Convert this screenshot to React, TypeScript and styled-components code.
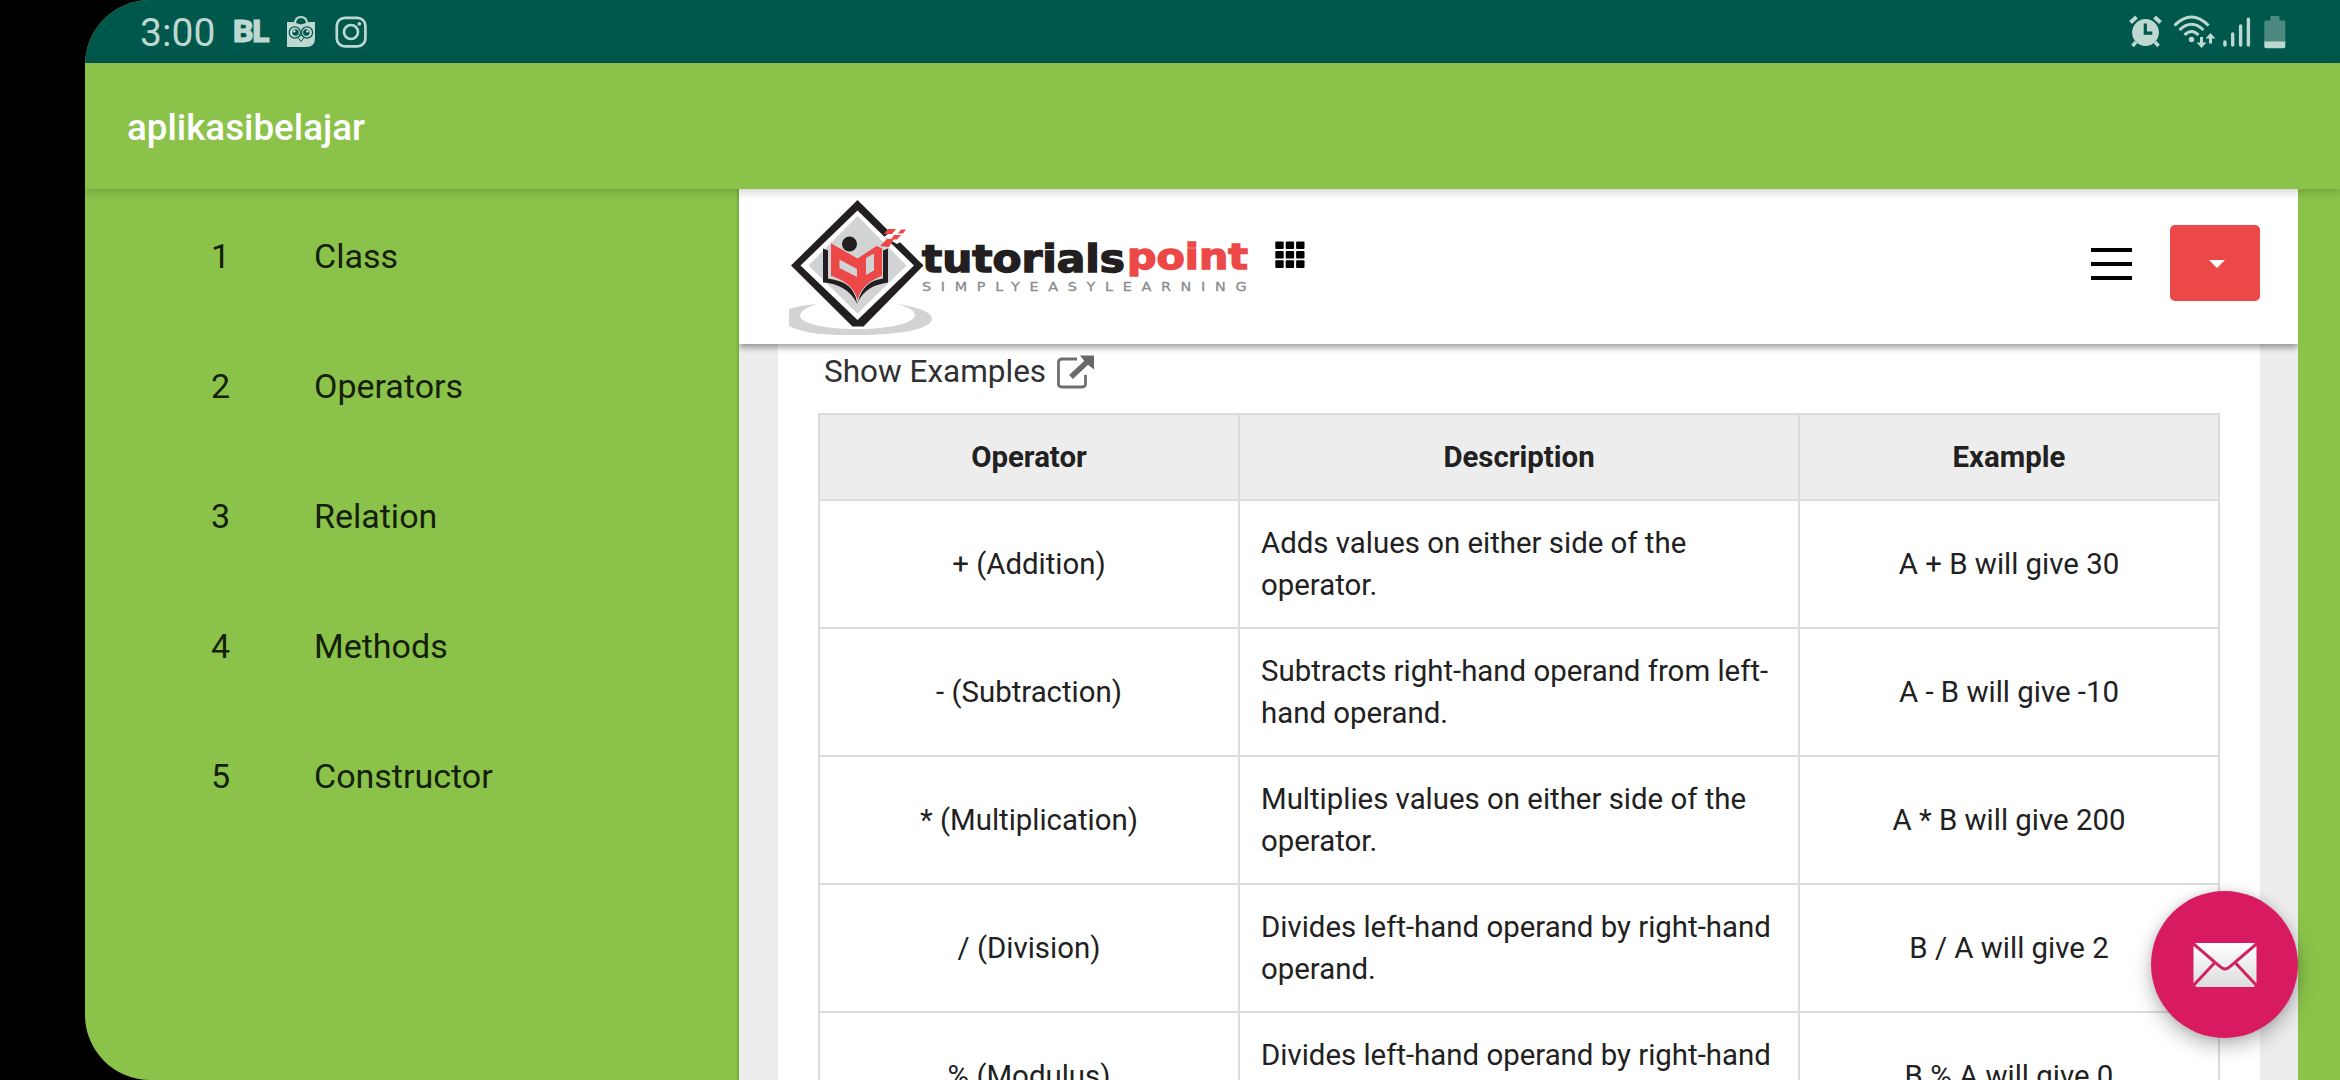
import React from 'react';
import styled, { createGlobalStyle } from 'styled-components';

const Global = createGlobalStyle`
  * { box-sizing: border-box; }
  body { margin: 0; background: #000; font-family: Roboto, "Noto Sans", sans-serif; overflow: hidden; }
`;

const ink = '#bdd7d1';

const Device = styled.div`
  width: 2340px;
  height: 1080px;
  padding-left: 85px;
  background: #000;
  overflow: hidden;
`;

const Screen = styled.div`
  position: relative;
  display: flex;
  flex-direction: column;
  height: 1080px;
  background: #8bc34a;
  border-radius: 65px 0 0 65px;
  overflow: hidden;
`;

const StatusBar = styled.div`
  flex: none;
  display: flex;
  justify-content: space-between;
  height: 63px;
  padding: 0 54px 0 55px;
  background: #00574b;
  color: ${ink};
`;

const StatusGroup = styled.div`
  display: flex;
  align-items: center;
  height: 63px;
`;

const Clock = styled.span`
  width: 93px;
  font-size: 39px;
  line-height: 63px;
  padding-top: 4px;
  letter-spacing: 0.1px;
`;

const Carrier = styled.span`
  width: 53px;
  font-size: 32px;
  font-weight: 900;
  line-height: 63px;
  letter-spacing: -1.5px;
  -webkit-text-stroke: 0.8px ${ink};
`;

const StatusIcon = styled.svg<{ $gap?: number }>`
  flex: none;
  display: block;
  margin-right: ${(p) => p.$gap ?? 0}px;
`;

const AppBar = styled.header`
  flex: none;
  display: flex;
  align-items: center;
  height: 126px;
  padding: 3px 0 0 42px;
  background: #8bc34a;
  color: #fff;
  box-shadow: 0 2px 10px rgba(0, 0, 0, 0.22);
  z-index: 3;
`;

const Title = styled.h1`
  margin: 0;
  font-size: 36.75px;
  font-weight: 500;
  line-height: 48px;
`;

const Body = styled.div`
  flex: 1;
  min-height: 0;
  display: flex;
`;

const Lessons = styled.ul`
  list-style: none;
  margin: 0;
  padding: 2px 0 0;
  width: 654px;
`;

const Lesson = styled.li`
  display: flex;
  align-items: center;
  height: 130px;
  padding-left: 126px;
  font-size: 34px;
  color: #15200a;
`;

const LessonNumber = styled.span`
  width: 103px;
`;

const WebView = styled.section`
  display: flex;
  flex-direction: column;
  width: 1559px;
  background: #ededed;
  box-shadow: 0 0 4px rgba(0, 0, 0, 0.35);
  overflow: hidden;
  clip-path: inset(0 0 0 -3px);
`;

const SiteHeader = styled.div`
  flex: none;
  display: flex;
  align-items: flex-start;
  height: 155px;
  padding: 11px 38px 0 50px;
  background: #fff;
  box-shadow: 0 3px 7px rgba(0, 0, 0, 0.42);
  z-index: 2;
`;

const Logo = styled.svg`
  flex: none;
  display: block;
`;

const GridIcon = styled.svg`
  flex: none;
  margin: 41px 0 0 26px;
`;

const MenuButton = styled.div`
  display: flex;
  flex-direction: column;
  gap: 10px;
  margin: 48px 38px 0 auto;
`;

const MenuBar = styled.span`
  width: 41px;
  height: 4px;
  background: #000;
`;

const DropButton = styled.div`
  display: flex;
  justify-content: center;
  align-items: flex-start;
  width: 90px;
  height: 76px;
  margin-top: 25px;
  padding: 35px 0 0 4px;
  border-radius: 5px;
  background: #ec4847;
`;

const Caret = styled.span`
  border: 8px solid transparent;
  border-top-color: #fff;
  border-bottom: 0;
`;

const Article = styled.main`
  flex: 1;
  min-height: 0;
  margin: 0 38px 0 39px;
  padding: 0 40px;
  background: #fff;
`;

const Examples = styled.div`
  display: flex;
  align-items: center;
  height: 69px;
  padding: 0 0 14px 6px;
  font-size: 31.5px;
  color: #313131;
  gap: 11px;
`;

const Table = styled.table`
  width: 1402px;
  table-layout: fixed;
  border-collapse: collapse;
  font-size: 29.4px;
  line-height: 42px;
  color: #212121;
`;

const Col = styled.col<{ $w: number }>`
  width: ${(p) => p.$w}px;
`;

const Head = styled.th`
  height: 86px;
  padding: 0 21px;
  border: 2px solid #dcdcdc;
  background: #ededed;
  font-weight: 700;
`;

const Cell = styled.td<{ $left?: boolean }>`
  height: 128px;
  padding: 0 21px;
  border: 2px solid #dcdcdc;
  text-align: ${(p) => (p.$left ? 'left' : 'center')};
`;

const Fab = styled.button`
  position: absolute;
  left: 2066px;
  top: 891px;
  display: flex;
  align-items: center;
  justify-content: center;
  width: 147px;
  height: 147px;
  padding: 0;
  border: 0;
  border-radius: 50%;
  background: #d81b60;
  box-shadow: 0 8px 20px rgba(0, 0, 0, 0.27), 0 0 8px rgba(0, 0, 0, 0.1);
  z-index: 4;
`;

const lessons = ['Class', 'Operators', 'Relation', 'Methods', 'Constructor'];

const rows = [
  ['+ (Addition)', 'Adds values on either side of the operator.', 'A + B will give 30'],
  ['- (Subtraction)', 'Subtracts right-hand operand from left-hand operand.', 'A - B will give -10'],
  ['* (Multiplication)', 'Multiplies values on either side of the operator.', 'A * B will give 200'],
  ['/ (Division)', 'Divides left-hand operand by right-hand operand.', 'B / A will give 2'],
  ['% (Modulus)', 'Divides left-hand operand by right-hand operand and returns remainder.', 'B % A will give 0'],
];

const OwlBagIcon = () => (
  <StatusIcon $gap={19} width="30" height="32" viewBox="0 0 30 32">
    <path d="M9 8C9 2.5 11.500 1 15 1s6 1.500 6 7" fill="none" stroke={ink} strokeWidth="2" />
    <path d="M1 6h6l3 1 5 1.500L20 7l3-1h6v16c0 6-3 9-9 9H1z" fill={ink} />
    <circle cx="8.800" cy="16.500" r="5.600" fill="none" stroke="#00574b" strokeWidth="1.200" />
    <circle cx="21" cy="16.500" r="5.600" fill="none" stroke="#00574b" strokeWidth="1.200" />
    <circle cx="9.500" cy="16.500" r="3.200" fill="#00574b" />
    <circle cx="20.300" cy="16.500" r="3.200" fill="#00574b" />
    <circle cx="8.300" cy="15.300" r="1.300" fill={ink} />
    <circle cx="21.500" cy="15.300" r="1.300" fill={ink} />
    <path d="M12 21.500l3-2.500 3 2.500-3 4z" fill={ink} stroke="#00574b" strokeWidth="1" />
  </StatusIcon>
);

const CameraIcon = () => (
  <StatusIcon width="32" height="32" viewBox="0 0 32 32" fill="none" stroke={ink} strokeWidth="2.700">
    <rect x="1.800" y="1.800" width="28.600" height="28.600" rx="8" />
    <circle cx="16" cy="16" r="7" />
    <circle cx="24.300" cy="7.800" r="1.900" fill={ink} stroke="none" />
  </StatusIcon>
);

const AlarmIcon = () => (
  <StatusIcon $gap={11} width="33" height="33" viewBox="0 0 33 33">
    <g stroke={ink} fill="none">
      <path d="M1.500 7.500L7.500 2M31.500 7.500L25.500 2" strokeWidth="4" />
      <path d="M7 27l-3.500 4M26 27l3.500 4" strokeWidth="3.500" />
    </g>
    <circle cx="16.500" cy="17.500" r="13.400" fill={ink} />
    <path d="M16.300 8.500v9.700h7" fill="none" stroke="#00574b" strokeWidth="3.200" />
  </StatusIcon>
);

const WifiIcon = () => (
  <StatusIcon $gap={7} width="43" height="34" viewBox="0 0 43 34">
    <g fill="none" stroke={ink} strokeWidth="3">
      <path d="M1.500 10.500Q18.500-6.500 35.500 10.500" />
      <path d="M6.500 15Q18.500 3.500 30.500 15" />
      <path d="M11.500 20Q18.500 13 25.500 20" />
      <path d="M28.500 22v8.500M37.500 28.500V20" />
    </g>
    <circle cx="18.500" cy="24.500" r="2.700" fill={ink} />
    <path d="M23.500 27.500h10l-5 5.500zM32.500 23.500h10l-5-5.500z" fill={ink} />
  </StatusIcon>
);

const SignalIcon = () => (
  <StatusIcon $gap={13} width="28" height="32" viewBox="0 0 28 32" fill="none" stroke={ink} strokeWidth="3.400" strokeLinecap="round">
    <path d="M1.900 26v3M9.700 18v11M17.600 10v19M25.400 3.200V29" />
  </StatusIcon>
);

const BatteryIcon = () => (
  <StatusIcon width="22" height="34" viewBox="0 0 22 34">
    <path d="M6.500 1h9v4.500H20q1.300 0 1.300 1.300V27H.300V6.800Q.300 5.500 1.600 5.500h4.900z" fill="#4c8a81" />
    <path d="M.300 26.500h21v5q0 1.800-1.800 1.800h-17.400q-1.800 0-1.800-1.800z" fill={ink} />
  </StatusIcon>
);

const BrandLogo = () => (
  <Logo width="460" height="136" viewBox="789 200 460 136">
    <path d="M789 309v17c20 10 50 9 70 9 45 0 73-7 73-16 0-7-14-12-35-15 10 3 18 6 18 11 0 8-25 14-58 14s-57-6-57-13c0-5 7-9 17-12-12 1-22 3-28 5z" fill="#d1d3d4" />
    <path d="M857.500 200l66 65.500-60 61h-11l-61.500-61z" fill="#231f20" />
    <path d="M857.500 210.500l56.500 55-56.500 54.500-57-54.500z" fill="#fff" />
    <path d="M857.500 216l49 49.500-49 48-49-48z" fill="#d1d3d4" />
    <path d="M884 237l13-10 16 8-16 9z" fill="#fff" />
    <path d="M823 248.500l5 2v28c14 2 25 8 28 16l1 9c-7-14-19-20-34-21z" fill="#231f20" />
    <path d="M888 248.500l-5 2v28c-13 2-22 8-25 16l-1 9c7-14 17-19 31-21z" fill="#231f20" />
    <circle cx="849.500" cy="244" r="7.500" fill="#231f20" />
    <path d="M830.500 242.500l27 15.500 19-12.500 6 2.500v28c-12 5-22 11-25 26-3-15-13-21-27-26z" fill="#ec4847" stroke="#d1d3d4" strokeWidth="1" />
    <path d="M839.500 259.500l17.500 9.500v8l-17.500-9z" fill="#d1d3d4" />
    <path d="M866 258l8-4.500v17l-8 4.500z" fill="#d1d3d4" />
    <path d="M880 246l7-7h7l-5 8zM888 229l8 0-4 5h-8zM901 229.500h5l-3 4h-5zM894 235h7l-4 4.500h-6z" fill="#ec4847" />
    <text x="922" y="271.500" fontFamily="DejaVu Sans, sans-serif" fontWeight="700" fontSize="36.500" textLength="203" lengthAdjust="spacingAndGlyphs" fill="#231f20" stroke="#231f20" strokeWidth="1.400">tutorials</text>
    <text x="1127" y="269" fontFamily="DejaVu Sans, sans-serif" fontWeight="700" fontSize="35.500" textLength="121" lengthAdjust="spacingAndGlyphs" fill="#ec4847" stroke="#ec4847" strokeWidth="1.400">point</text>
    <g transform="translate(922 291) scale(1.2 1)">
      <text fontFamily="DejaVu Sans, sans-serif" fontSize="12" textLength="270.500" fill="#8a8c8f" stroke="#8a8c8f" strokeWidth="0.300">SIMPLYEASYLEARNING</text>
    </g>
  </Logo>
);

const AppsIcon = () => (
  <GridIcon width="30" height="28" viewBox="0 0 30 28">
    {[0, 1, 2].map((r) =>
      [0, 1, 2].map((c) => <rect key={`${r}${c}`} x={0.3 + c * 10.4} y={0.5 + r * 9.4} width="8.400" height="7.600" rx="1" fill="#000" />),
    )}
  </GridIcon>
);

const OpenIcon = () => (
  <svg width="38" height="34" viewBox="0 0 38 34">
    <path d="M20 4H5Q1.500 4 1.500 7v22q0 3 3.500 3h20q3.500 0 3.500-3V20" fill="none" stroke="#6f6f6f" strokeWidth="2.800" />
    <path d="M14 22L30 7" stroke="#6a6a6a" strokeWidth="5.500" />
    <path d="M23 .500h14v14l-5-4-5-5z" fill="#666" />
  </svg>
);

const MailIcon = () => (
  <svg width="64" height="46" viewBox="0 0 64 46">
    <defs>
      <linearGradient id="paper" x1="0" y1="0" x2="0" y2="1">
        <stop offset="0" stopColor="#fff" />
        <stop offset="1" stopColor="#dcdcdc" />
      </linearGradient>
    </defs>
    <rect x="0.500" y="1" width="63" height="44" fill="url(#paper)" />
    <path d="M0 1.500L27 24.500Q32 29.500 37 24.500L64 1.500M0 44L21.500 21M64 44L42.500 21" fill="none" stroke="#cf2260" strokeWidth="3" />
    <path d="M0 0h3L0 5zM64 0h-3l3 5zM0 46h4l-4-5zM64 46h-4l4-5z" fill="#d81b60" />
  </svg>
);

export default function App() {
  return (
    <Device>
      <Global />
      <Screen>
        <StatusBar>
          <StatusGroup>
            <Clock>3:00</Clock>
            <Carrier>BL</Carrier>
            <OwlBagIcon />
            <CameraIcon />
          </StatusGroup>
          <StatusGroup>
            <AlarmIcon />
            <WifiIcon />
            <SignalIcon />
            <BatteryIcon />
          </StatusGroup>
        </StatusBar>
        <AppBar>
          <Title>aplikasibelajar</Title>
        </AppBar>
        <Body>
          <Lessons>
            {lessons.map((name, i) => (
              <Lesson key={name}>
                <LessonNumber>{i + 1}</LessonNumber>
                <span>{name}</span>
              </Lesson>
            ))}
          </Lessons>
          <WebView>
            <SiteHeader>
              <BrandLogo />
              <AppsIcon />
              <MenuButton>
                <MenuBar />
                <MenuBar />
                <MenuBar />
              </MenuButton>
              <DropButton>
                <Caret />
              </DropButton>
            </SiteHeader>
            <Article>
              <Examples>
                <span>Show Examples</span>
                <OpenIcon />
              </Examples>
              <Table>
                <colgroup>
                  <Col $w={420} />
                  <Col $w={560} />
                  <Col $w={420} />
                </colgroup>
                <thead>
                  <tr>
                    <Head>Operator</Head>
                    <Head>Description</Head>
                    <Head>Example</Head>
                  </tr>
                </thead>
                <tbody>
                  {rows.map(([op, text, example]) => (
                    <tr key={op}>
                      <Cell>{op}</Cell>
                      <Cell $left>{text}</Cell>
                      <Cell>{example}</Cell>
                    </tr>
                  ))}
                </tbody>
              </Table>
            </Article>
          </WebView>
        </Body>
        <Fab aria-label="Mail">
          <MailIcon />
        </Fab>
      </Screen>
    </Device>
  );
}
